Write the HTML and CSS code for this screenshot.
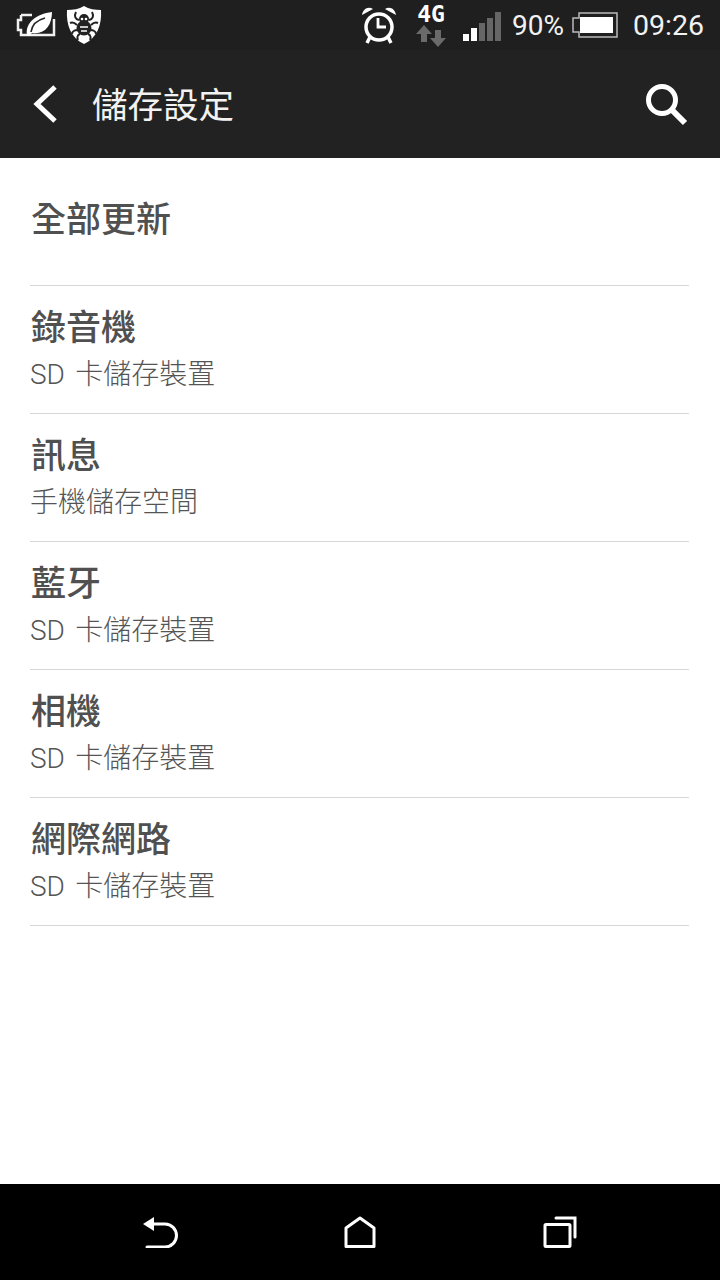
FILE: index.html
```html
<!DOCTYPE html>
<html lang="zh-TW">
<head>
    <meta charset="UTF-8">
    <meta name="viewport" content="width=device-width, initial-scale=1.0">
    <title>儲存設定</title>
    <link rel="stylesheet" href="styles.css">
</head>
<body>
    <div class="screen">
        <div class="status-bar">
            <div class="status-left">
                <svg class="icon-eco" width="42" height="30" viewBox="0 0 42 30">
                    <path d="M5 5H16M30 25H5v-5H2V10h3V5M38 9v16H30" fill="none" stroke="#f0f0f0" stroke-width="2.500"/>
                    <path d="M11 25C9 13 20 4 36 2C36 15 29 25 16 23L13 26z" fill="#fff"/>
                    <path d="M15 22C16 15 21 10 29 8" fill="none" stroke="#222" stroke-width="1.600"/>
                </svg>
                <svg class="icon-shield" width="36" height="40" viewBox="0 0 36 40">
                    <path d="M18 1C23 4 29 5 35 5C36 20 31 33 18 39C5 33 0 20 1 5C7 5 13 4 18 1z" fill="#fff"/>
                    <g fill="none" stroke="#222" stroke-width="2">
                        <path d="M13 15C9 14 8 11 10 7M23 15C27 14 28 11 26 7"/>
                        <path d="M11 20C8 17 6 17 4 18M25 20C28 17 30 17 32 18"/>
                        <path d="M12 25C8 25 6 27 6 29M24 25C28 25 30 27 30 29"/>
                        <path d="M14 29C11 30 11 33 12 35M22 29C25 30 25 33 24 35"/>
                    </g>
                    <circle cx="18" cy="23" r="7.500" fill="#222"/>
                    <circle cx="18" cy="14" r="5" fill="#222"/>
                    <circle cx="16" cy="14" r="1.300" fill="#fff"/>
                    <circle cx="20" cy="14" r="1.300" fill="#fff"/>
                    <path d="M14 22h8M15 26h6" stroke="#fff" stroke-width="1.500"/>
                </svg>
            </div>
            <div class="status-right">
                <svg class="icon-alarm" width="36" height="38" viewBox="0 0 36 38">
                    <circle cx="18" cy="21" r="13" fill="none" stroke="#fff" stroke-width="3.500"/>
                    <path d="M17 12v9h8" fill="none" stroke="#fff" stroke-width="2.800"/>
                    <path d="M1 9C2 3 7 0 12 3zM35 9C34 3 29 0 24 3z" fill="#fff"/>
                    <path d="M9 31l-3 6M27 31l3 6" stroke="#fff" stroke-width="3.500"/>
                </svg>
                <div class="net">
                    <span class="net-label">4G</span>
                    <svg class="net-arrows" width="30" height="22" viewBox="0 0 30 22">
                        <path d="M8 0l8 9h-5v8H5V9H0z" fill="#6a6a6a"/>
                        <path d="M19 5h6v8h5l-8 9-8-9h5z" fill="#6a6a6a"/>
                    </svg>
                </div>
                <div class="signal">
                    <span class="bar bar-1"></span>
                    <span class="bar bar-2"></span>
                    <span class="bar bar-3"></span>
                    <span class="bar bar-4"></span>
                    <span class="bar bar-5"></span>
                </div>
                <span class="status-text pct">90%</span>
                <svg class="icon-battery" width="46" height="26" viewBox="0 0 46 26">
                    <path d="M7 1h38v24H7v-5H1V6h6z" fill="none" stroke="#bbb" stroke-width="1.500"/>
                    <rect x="8" y="5" width="33" height="16" fill="#fff"/>
                </svg>
                <span class="status-text time">09:26</span>
            </div>
        </div>

        <header class="action-bar">
            <svg class="icon-back" width="28" height="38" viewBox="0 0 28 38">
                <path d="M24 2L6 19l18 17" fill="none" stroke="#fff" stroke-width="5"/>
            </svg>
            <h1 class="page-title">儲存設定</h1>
            <svg class="icon-search" width="44" height="44" viewBox="0 0 44 44">
                <circle cx="18" cy="18" r="13.500" fill="none" stroke="#fff" stroke-width="5"/>
                <path d="M28 28l13 13" stroke="#fff" stroke-width="6"/>
            </svg>
        </header>

        <main class="list">
            <div class="row row-single">
                <div class="row-title">全部更新</div>
            </div>
            <div class="row">
                <div class="row-title">錄音機</div>
                <div class="row-sub">SD 卡儲存裝置</div>
            </div>
            <div class="row">
                <div class="row-title">訊息</div>
                <div class="row-sub">手機儲存空間</div>
            </div>
            <div class="row">
                <div class="row-title">藍牙</div>
                <div class="row-sub">SD 卡儲存裝置</div>
            </div>
            <div class="row">
                <div class="row-title">相機</div>
                <div class="row-sub">SD 卡儲存裝置</div>
            </div>
            <div class="row">
                <div class="row-title">網際網路</div>
                <div class="row-sub">SD 卡儲存裝置</div>
            </div>
        </main>

        <nav class="nav-bar">
            <svg width="36" height="32" viewBox="0 0 36 32">
                <path d="M4 31h18a11 11 0 0 0 0-23H8" fill="none" stroke="#fff" stroke-width="3" stroke-linecap="round"/>
                <path d="M11 1v14L0 8z" fill="#fff"/>
            </svg>
            <svg class="nav-home" width="32" height="32" viewBox="0 0 32 32">
                <path d="M2 30.500V12L16 2l14 10v18.500z" fill="none" stroke="#fff" stroke-width="3" stroke-linejoin="round"/>
            </svg>
            <svg width="34" height="32" viewBox="0 0 34 32">
                <rect x="2" y="8.500" width="25" height="22" rx="1" fill="none" stroke="#fff" stroke-width="3"/>
                <path d="M13 2h19v19" fill="none" stroke="#fff" stroke-width="3" stroke-linecap="round"/>
            </svg>
        </nav>
    </div>
</body>
</html>
```

FILE: styles.css
```css
* {
    box-sizing: border-box;
}
html, body {
    margin: 0;
    padding: 0;
}
body {
    font-family: "Noto Sans CJK TC", "Noto Sans", sans-serif;
    background: #fff;
}
.screen {
    width: 720px;
    height: 1280px;
    display: flex;
    flex-direction: column;
    overflow: hidden;
}
.status-bar {
    height: 50px;
    background: #1f1f1f;
    display: flex;
    align-items: center;
    justify-content: space-between;
    padding: 0 16px;
}
.status-left {
    display: flex;
    align-items: center;
    gap: 8px;
}
.status-right {
    display: flex;
    align-items: center;
}
.icon-alarm {
    margin-right: 19px;
}
.net {
    width: 30px;
    margin-right: 17px;
    display: flex;
    flex-direction: column;
    align-items: center;
}
.net-label {
    font-family: "DejaVu Sans Mono", monospace;
    font-size: 23px;
    line-height: 20px;
    font-weight: bold;
    color: #fff;
}
.net-arrows {
    margin-top: 1px;
}
.signal {
    display: flex;
    align-items: flex-end;
    gap: 2px;
    height: 30px;
    margin-top: 2px;
    margin-right: 11px;
}
.bar {
    width: 6px;
    background: #666;
}
.bar-1 { height: 7px; background: #fff; }
.bar-2 { height: 13px; background: #fff; }
.bar-3 { height: 18px; }
.bar-4 { height: 23px; }
.bar-5 { height: 29px; }
.status-text {
    font-family: "Roboto", sans-serif;
    font-size: 28px;
    color: #f2f2f2;
}
.pct {
    margin-right: 8px;
}
.icon-battery {
    margin-right: 15px;
}
.time {
    font-size: 28.500px;
}
.action-bar {
    height: 108px;
    background: #222;
    display: flex;
    align-items: center;
    padding: 0 32px 0 31px;
}
.icon-back {
    margin-right: 33px;
}
.page-title {
    flex: 1;
    margin: 0 0 4px;
    font-size: 35.500px;
    font-weight: 400;
    color: #f2f2f2;
}
.list {
    flex: 1;
    padding: 0 31px 0 30px;
    background: #fff;
}
.row {
    height: 128px;
    padding-top: 13px;
    border-bottom: 1px solid #d8d8d8;
}
.row-single {
    padding-top: 33px;
}
.row-title {
    padding-left: 1px;
    font-size: 35px;
    line-height: 52px;
    font-weight: 500;
    color: #505050;
}
.row-sub {
    margin-top: 3px;
    font-family: "Roboto", "Noto Sans CJK TC", sans-serif;
    font-size: 28px;
    line-height: 42px;
    font-weight: 300;
    word-spacing: 3.500px;
    color: #555;
}
.nav-bar {
    height: 96px;
    background: #000;
    display: flex;
    align-items: center;
    justify-content: space-between;
    padding: 0 143px;
}
.nav-home {
    margin-left: -2px;
}
```
